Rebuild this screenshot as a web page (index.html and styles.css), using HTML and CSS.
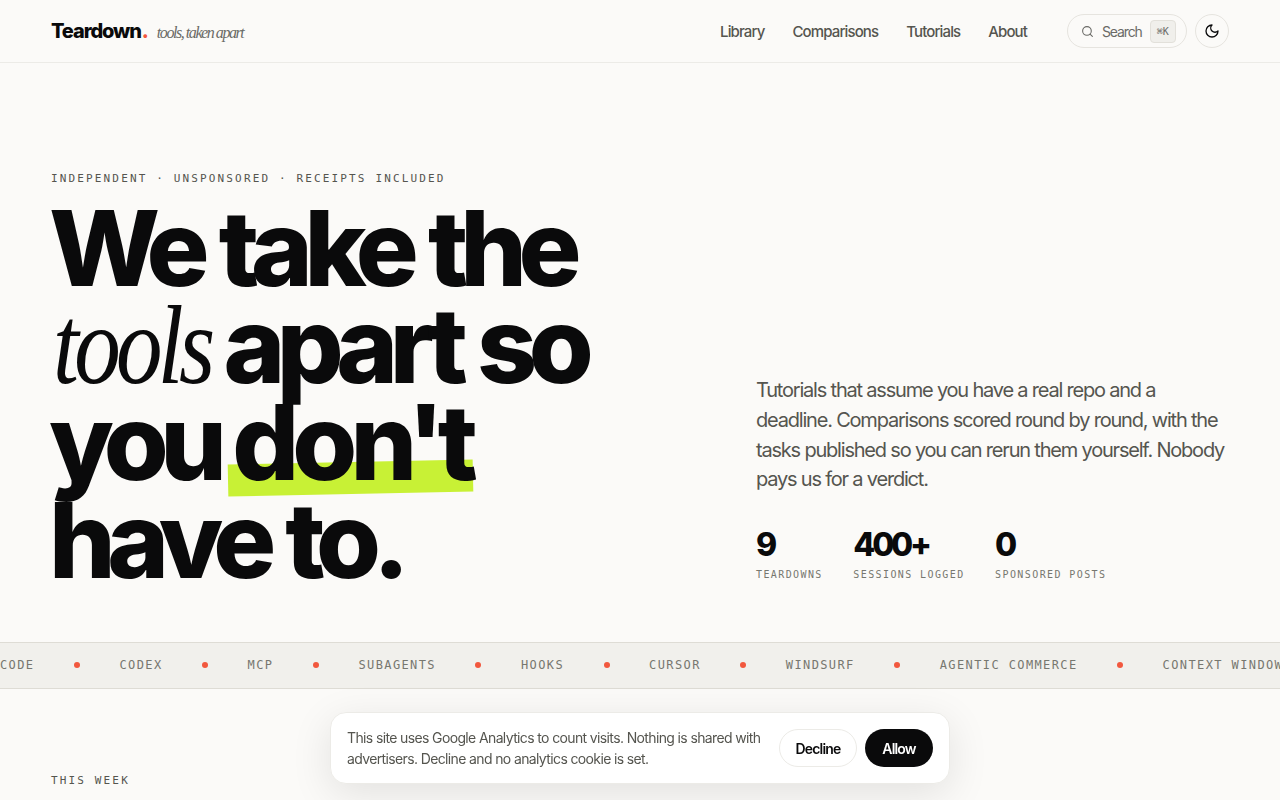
FILE: index.html
```html
<!DOCTYPE html>
<html lang="en">
<head>
    <meta charset="UTF-8">
    <meta name="viewport" content="width=device-width, initial-scale=1.0">
    <title>Teardown - tools, taken apart</title>
    <link rel="stylesheet" href="styles.css">
</head>
<body>
    <header class="site-header">
        <div class="brand">
            <a class="logo" href="#">Teardown<span class="logo-dot">.</span></a>
            <span class="tagline">tools, taken apart</span>
        </div>
        <nav class="site-nav">
            <a href="#">Library</a>
            <a href="#">Comparisons</a>
            <a href="#">Tutorials</a>
            <a href="#">About</a>
        </nav>
        <button class="search-btn">
            <svg class="search-icon" viewBox="0 0 24 24" width="13" height="13" fill="none" stroke="currentColor" stroke-width="2" stroke-linecap="round"><circle cx="11" cy="11" r="8"/><path d="m21 21-4.3-4.3"/></svg>
            <span>Search</span>
            <kbd>⌘K</kbd>
        </button>
        <button class="theme-btn">
            <svg viewBox="0 0 24 24" width="16" height="16" fill="none" stroke="currentColor" stroke-width="2" stroke-linecap="round" stroke-linejoin="round"><path d="M12 3a6 6 0 0 0 9 9 9 9 0 1 1-9-9Z"/></svg>
        </button>
    </header>

    <section class="hero">
        <div class="hero-left">
            <p class="eyebrow">Independent · Unsponsored · Receipts included</p>
            <h1>We take the <em>tools</em> apart so you <span class="marked">don't</span> have to.</h1>
        </div>
        <div class="hero-right">
            <p class="lede">Tutorials that assume you have a real repo and a deadline. Comparisons scored round by round, with the tasks published so you can rerun them yourself. Nobody pays us for a verdict.</p>
            <div class="stats">
                <div><strong>9</strong><span>Teardowns</span></div>
                <div><strong>400+</strong><span>Sessions logged</span></div>
                <div><strong>0</strong><span>Sponsored posts</span></div>
            </div>
        </div>
    </section>

    <div class="ticker">
        <span>Code</span><i></i>
        <span>Codex</span><i></i>
        <span>MCP</span><i></i>
        <span>Subagents</span><i></i>
        <span>Hooks</span><i></i>
        <span>Cursor</span><i></i>
        <span>Windsurf</span><i></i>
        <span>Agentic commerce</span><i></i>
        <span>Context windows</span>
    </div>

    <section class="week">
        <p class="eyebrow">This week</p>
    </section>

    <div class="cookie">
        <p>This site uses Google Analytics to count visits. Nothing is shared with advertisers. Decline and no analytics cookie is set.</p>
        <button class="btn-decline">Decline</button>
        <button class="btn-allow">Allow</button>
    </div>
</body>
</html>
```

FILE: styles.css
```css
* {
    box-sizing: border-box;
}
html, body {
    height: 100%;
    overflow: hidden;
}
body {
    margin: 0;
    background-color: #fbfaf8;
    color: #0a0a0b;
    font-family: Inter, "Liberation Sans", sans-serif;
}
a {
    color: inherit;
    text-decoration: none;
}
button {
    font-family: inherit;
    cursor: pointer;
}

/* header */
.site-header {
    display: flex;
    align-items: center;
    height: 63px;
    padding: 0 51px;
    border-bottom: 1px solid #ecebe7;
}
.brand {
    display: flex;
    align-items: baseline;
    gap: 9px;
    margin-right: auto;
}
.logo {
    font-size: 20px;
    font-weight: 800;
    letter-spacing: -0.055em;
}
.logo-dot {
    margin-left: 1px;
    color: #f2583e;
}
.tagline {
    font-family: "Liberation Serif", serif;
    font-style: italic;
    font-size: 16px;
    letter-spacing: -0.09em;
    color: #6a6a66;
}
.site-nav {
    display: flex;
    gap: 28px;
    margin-right: 40px;
    font-size: 15px;
    font-weight: 500;
    letter-spacing: -0.058em;
    color: #55554f;
}
.search-btn {
    display: flex;
    align-items: center;
    gap: 8px;
    width: 120px;
    height: 34px;
    padding: 0 10px 0 13px;
    border: 1px solid #e6e4df;
    border-radius: 17px;
    background: none;
    font-size: 14px;
    letter-spacing: -0.08em;
    color: #6a6a66;
}
.search-icon {
    flex: none;
}
.search-btn kbd {
    flex: none;
    display: flex;
    align-items: center;
    justify-content: center;
    width: 26px;
    height: 23px;
    border: 1px solid #e2e0da;
    border-radius: 4px;
    background-color: #f0efeb;
    font-family: "DejaVu Sans Mono", monospace;
    font-size: 10px;
    letter-spacing: 0;
    color: #6a6a66;
}
.theme-btn {
    display: flex;
    align-items: center;
    justify-content: center;
    width: 34px;
    height: 34px;
    margin-left: 8px;
    padding: 0;
    border: 1px solid #e6e4df;
    border-radius: 50%;
    background: none;
    color: #0a0a0b;
}

/* hero */
.hero {
    display: grid;
    grid-template-columns: 1fr 473px;
    align-items: end;
    height: 579px;
    padding: 0 51px 54px;
}
.hero-right {
    padding-bottom: 8.2px;
}
.eyebrow {
    margin: 0;
    font-family: "DejaVu Sans Mono", monospace;
    font-size: 11px;
    letter-spacing: 0.195em;
    text-transform: uppercase;
    color: #55554f;
}
h1 {
    width: 600px;
    margin: 14px 0 0 -2px;
    font-size: 105px;
    font-weight: 800;
    line-height: 97.3px;
    letter-spacing: -0.08em;
    word-spacing: 3px;
}
h1 em {
    display: inline-block;
    margin: 0 -37px 0 4px;
    font-family: "Liberation Serif", serif;
    font-size: 112px;
    font-weight: 400;
    line-height: 0.8;
    letter-spacing: -0.05em;
    transform: scaleX(0.83);
    transform-origin: left;
}
.marked {
    position: relative;
    z-index: 0;
    display: inline-block;
    margin-left: -4px;
    letter-spacing: -0.065em;
}
.marked::after {
    content: "";
    position: absolute;
    z-index: -1;
    left: -4px;
    right: -2px;
    bottom: -3px;
    height: 32px;
    background-color: #c8f135;
    transform: rotate(-1.2deg);
}
.lede {
    margin: 0;
    font-size: 20px;
    line-height: 29.6px;
    letter-spacing: -0.06em;
    color: #55554f;
}
.stats {
    display: flex;
    gap: 30.5px;
    margin-top: 32px;
}
.stats strong {
    display: block;
    font-size: 32px;
    font-weight: 800;
    line-height: 36px;
    letter-spacing: -0.1em;
}
.stats span {
    display: block;
    margin-top: 6px;
    font-family: "DejaVu Sans Mono", monospace;
    font-size: 10px;
    letter-spacing: 0.14em;
    text-transform: uppercase;
    color: #77776f;
}

/* ticker */
.ticker {
    display: flex;
    align-items: center;
    gap: 39.5px;
    height: 47px;
    padding-bottom: 1px;
    border-top: 1px solid #dedcd5;
    border-bottom: 1px solid #dedcd5;
    background-color: #f1f0ec;
    font-family: "DejaVu Sans Mono", monospace;
    font-size: 12px;
    letter-spacing: 0.116em;
    text-transform: uppercase;
    white-space: nowrap;
    color: #77776f;
}
.ticker i {
    flex: none;
    width: 6px;
    height: 6px;
    border-radius: 50%;
    background-color: #f2583e;
}

/* this week */
.week {
    padding: 85px 51px 0;
}

/* cookie banner */
.cookie {
    position: fixed;
    left: 330px;
    bottom: 16px;
    display: flex;
    align-items: center;
    width: 620px;
    height: 72px;
    padding: 0 16px;
    border: 1px solid #ecebe7;
    border-radius: 16px;
    background-color: #fff;
    box-shadow: 0 10px 40px rgba(10, 10, 11, 0.1);
}
.cookie p {
    flex: 1;
    margin: 0;
    font-size: 14px;
    line-height: 21px;
    letter-spacing: -0.045em;
    color: #55554f;
}
.cookie button {
    height: 38px;
    border-radius: 19px;
    font-size: 14px;
    font-weight: 600;
    letter-spacing: -0.06em;
}
.btn-decline {
    width: 78px;
    margin-right: 8px;
    border: 1px solid #ecebe7;
    background-color: #fff;
    color: #0a0a0b;
}
.btn-allow {
    width: 68px;
    border: 0;
    background-color: #0a0a0b;
    color: #fff;
}
```
